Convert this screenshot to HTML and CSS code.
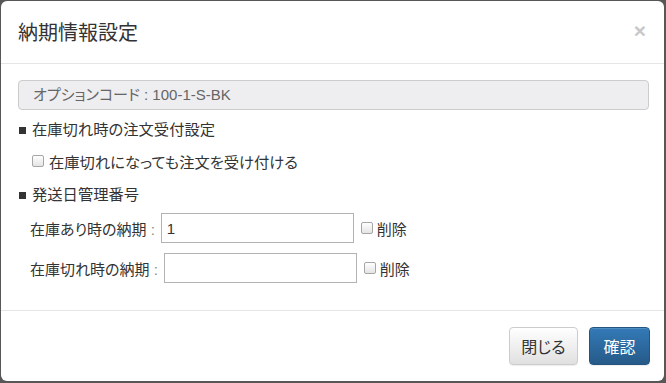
FILE: index.html
```html
<!DOCTYPE html>
<html lang="ja">
<head>
    <meta charset="UTF-8">
    <meta name="viewport" content="width=device-width, initial-scale=1.0">
    <title>納期情報設定</title>
<link rel="stylesheet" href="styles.css">
</head>
<body>
    <div class="modal">
        <div class="modal-header">
            <h4 class="modal-title">納期情報設定</h4>
            <span class="close">×</span>
        </div>
        <div class="modal-body">
            <div class="readonly">オプションコード : 100-1-S-BK</div>

            <p class="section-title"><span class="square"></span>在庫切れ時の注文受付設定</p>
            <label class="check-row">
                <span class="checkbox"></span>在庫切れになっても注文を受け付ける
            </label>

            <p class="section-title second"><span class="square"></span>発送日管理番号</p>
            <div class="field-row">
                <span class="field-label">在庫あり時の納期 <span class="colon">:</span></span>
                <input type="text" class="field-input" value="1">
                <span class="checkbox small-gap"></span>削除
            </div>
            <div class="field-row row-two">
                <span class="field-label">在庫切れ時の納期 <span class="colon">:</span></span>
                <input type="text" class="field-input" value="">
                <span class="checkbox small-gap"></span>削除
            </div>
        </div>
        <div class="modal-footer">
            <button class="btn btn-default">閉じる</button>
            <button class="btn btn-primary">確認</button>
        </div>
    </div>
</body>
</html>
```

FILE: styles.css
```css
*{
    margin: 0;
    box-sizing: border-box;
}
body{
    background-color: #575757;
    font-family: "Liberation Sans", "Noto Sans CJK JP", sans-serif;
    font-feature-settings: "palt";
    color: #333;
    width: 666px;
    height: 383px;
    overflow: hidden;
}
.modal{
    width: 663px;
    height: 380px;
    margin: 1px 0 0 1px;
    background-color: #fff;
    border-radius: 6px;
    display: flex;
    flex-direction: column;
}
.modal-header{
    height: 63px;
    border-bottom: 1px solid #e5e5e5;
    padding: 0 18px 0 17px;
    display: flex;
    align-items: center;
    justify-content: space-between;
}
.modal-title{
    font-size: 20px;
    font-weight: normal;
    color: #333;
    padding-bottom: 2px;
}
.close{
    font-size: 21px;
    font-weight: bold;
    color: #c8c8c8;
    line-height: 1;
    padding-bottom: 4px;
}
.modal-body{
    flex: 1;
    padding: 16px 15px 0 17px;
    font-size: 15px;
}
.readonly{
    height: 30px;
    background-color: #eeedef;
    border: 1px solid #cccccc;
    border-radius: 4px;
    padding-left: 14px;
    font-size: 15px;
    line-height: 28px;
    color: #666;
}
.section-title{
    margin-top: 10px;
    height: 20px;
    line-height: 20px;
    display: flex;
    align-items: center;
    font-size: 15.3px;
}
.section-title.second{
    margin-top: 14px;
}
.square{
    width: 7px;
    height: 7px;
    background-color: #333;
    margin: 0 6px 0 1px;
}
.check-row{
    margin-top: 11px;
    height: 20px;
    display: flex;
    align-items: center;
    padding-left: 14px;
    font-size: 15.3px;
}
.checkbox{
    width: 12px;
    height: 12px;
    border: 1px solid #a6a6a6;
    border-radius: 2px;
    background: linear-gradient(#ffffff, #e4e4e4);
    margin-right: 5px;
    display: inline-block;
}
.small-gap{
    margin-left: 7px;
    margin-right: 4px;
}
.field-row{
    margin-top: 8px;
    height: 30px;
    display: flex;
    align-items: center;
    padding-left: 12px;
    font-size: 15px;
}
.field-row.row-two{
    margin-top: 10px;
}
.field-label{
    margin-right: 6px;
}
.colon{
    color: #888;
}
.field-input{
    width: 193px;
    height: 30px;
    border: 1px solid #b3b3b3;
    padding: 0 5px;
    font-family: "Liberation Sans", sans-serif;
    font-size: 15px;
    color: #333;
}
.modal-footer{
    height: 71px;
    border-top: 1px solid #e5e5e5;
    display: flex;
    align-items: center;
    justify-content: flex-end;
    gap: 11px;
    padding-right: 14px;
}
.btn{
    height: 38px;
    border-radius: 4px;
    font-family: "Liberation Sans", "Noto Sans CJK JP", sans-serif;
    font-feature-settings: "palt";
    font-size: 16px;
    box-shadow: inset 0 1px 0 rgba(255, 255, 255, 0.15), 0 1px 1px rgba(0, 0, 0, 0.075);
}
.btn-default{
    width: 69px;
    color: #333;
    border: 1px solid #cccccc;
    background: linear-gradient(#ffffff, #e0e0e0);
}
.btn-primary{
    width: 61px;
    color: #fff;
    border: 1px solid #245580;
    background: linear-gradient(#337ab7, #265a88);
}
```
